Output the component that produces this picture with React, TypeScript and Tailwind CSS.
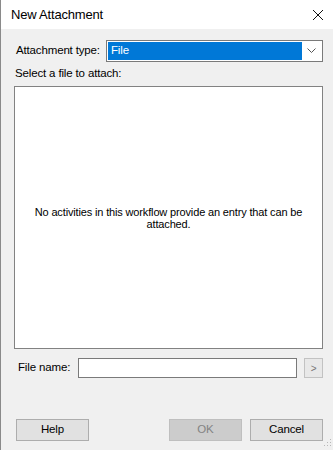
import React from "react";

export default function App() {
  const font = { fontFamily: '"Liberation Sans", Arial, sans-serif' };
  return (
    <div className="w-[333px] h-[450px] bg-[#f0f0f0] border-l border-[#8a8a8a] flex flex-col text-[11.5px] tracking-[-0.15px] text-black relative overflow-hidden" style={font}>
      <div className="h-[29px] bg-white flex items-center justify-between pl-[10px] pr-[9px] shrink-0">
        <span className="text-[13px] leading-none whitespace-nowrap tracking-[-0.2px]">New Attachment</span>
        <svg width="12" height="12" viewBox="0 0 12 12" className="mt-[1px]">
          <path d="M1 1 L11 11 M11 1 L1 11" stroke="#111" strokeWidth="1" fill="none" />
        </svg>
      </div>
      <div className="flex flex-col pl-[13px] pr-[10px]">
        <div className="flex items-center mt-[11px] h-[22px]">
          <span className="pl-[2px] w-[92px] shrink-0 whitespace-nowrap">Attachment type:</span>
          <div className="flex-1 h-[22px] border border-[#7a7a7a] bg-white flex items-center p-[1px]">
            <div className="flex-1 h-full bg-[#0078d7] text-white flex items-center pl-[3px]">File</div>
            <div className="w-[19px] flex items-center justify-center">
              <svg width="9" height="6" viewBox="0 0 9 6">
                <path d="M0.5 0.5 L4.5 4.5 L8.5 0.5" stroke="#555" strokeWidth="1" fill="none" />
              </svg>
            </div>
          </div>
        </div>
        <div className="mt-[4px] h-[14px] leading-[14px] pl-[1px] whitespace-nowrap">Select a file to attach:</div>
        <div className="mt-[6px] h-[263px] border border-[#828282] bg-white flex items-center justify-center px-[12px] text-center text-[11px] leading-[12px]">
          No activities in this workflow provide an entry that can be attached.
        </div>
        <div className="flex items-center mt-[9px] h-[20px]">
          <span className="pl-[4px] w-[64px] shrink-0 whitespace-nowrap">File name:</span>
          <div className="flex-1 h-[20px] border border-[#7a7a7a] bg-white" />
          <div className="ml-[7px] w-[19px] h-[20px] border border-[#c2c2c2] bg-[#e8e8e8] text-[#777] text-[10px] flex items-center justify-center">&gt;</div>
        </div>
        <div className="flex items-center mt-[41px] h-[22px]">
          <div className="ml-[2px] w-[73px] h-[22px] border border-[#adadad] bg-[#e1e1e1] flex items-center justify-center">Help</div>
          <div className="flex-1" />
          <div className="w-[73px] h-[22px] border border-[#bfbfbf] bg-[#cccccc] text-[#838383] flex items-center justify-center">OK</div>
          <div className="ml-[8px] w-[73px] h-[22px] border border-[#adadad] bg-[#e1e1e1] flex items-center justify-center">Cancel</div>
        </div>
      </div>
      <svg width="10" height="10" viewBox="0 0 10 10" className="absolute right-[1px] bottom-[1px]">
        <rect x="8" y="0" width="1" height="1" fill="#b8b8b8" />
        <rect x="5" y="3" width="1" height="1" fill="#b8b8b8" />
        <rect x="8" y="3" width="1" height="1" fill="#b8b8b8" />
        <rect x="2" y="6" width="1" height="1" fill="#b8b8b8" />
        <rect x="5" y="6" width="1" height="1" fill="#b8b8b8" />
        <rect x="8" y="6" width="1" height="1" fill="#b8b8b8" />
      </svg>
    </div>
  );
}
